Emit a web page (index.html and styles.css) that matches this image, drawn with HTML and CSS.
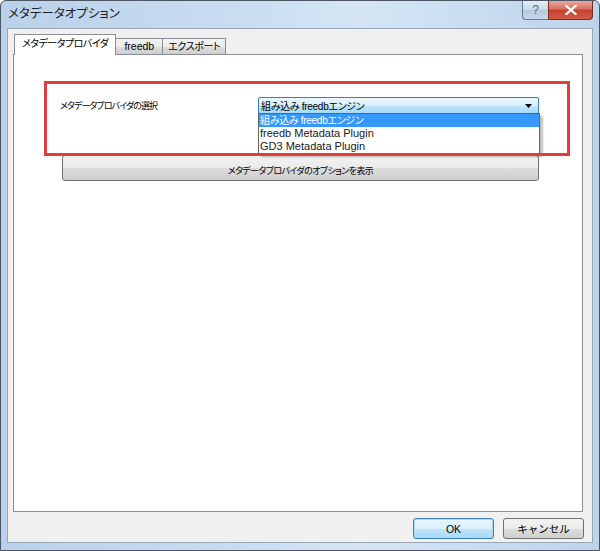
FILE: index.html
```html
<!DOCTYPE html>
<html lang="ja">
<head>
<meta charset="utf-8">
<title>メタデータオプション</title>
<link rel="stylesheet" href="styles.css">
</head>
<body>
<div class="window">
  <div class="titlebar">
    <span class="title">メタデータオプション</span>
    <div class="caption-buttons">
      <div class="cap-btn help">?</div>
      <div class="cap-btn close">
        <svg width="12" height="10" viewBox="0 0 12 10"><path d="M1.5 1 L10.5 9 M10.5 1 L1.5 9" stroke="#fff" stroke-width="2.3" stroke-linecap="square"/></svg>
      </div>
    </div>
  </div>
  <div class="client">
    <div class="tabs">
      <div class="tab active">メタデータプロバイダ</div>
      <div class="tab">freedb</div>
      <div class="tab">エクスポート</div>
    </div>
    <div class="panel">
      <div class="row">
        <span class="label">メタデータプロバイダの選択</span>
        <div class="combo-wrap">
          <div class="combo">
            <span class="combo-text">組み込み freedbエンジン</span>
            <svg class="arrow" width="7" height="4" viewBox="0 0 7 4"><path d="M0 0 H7 L3.5 4 Z" fill="#000"/></svg>
          </div>
          <ul class="dropdown">
            <li class="selected">組み込み freedbエンジン</li>
            <li>freedb Metadata Plugin</li>
            <li>GD3 Metadata Plugin</li>
          </ul>
        </div>
      </div>
      <button class="wide-btn">メタデータプロバイダのオプションを表示</button>
      <div class="highlight"></div>
    </div>
    <div class="footer">
      <button class="btn default">OK</button>
      <button class="btn">キャンセル</button>
    </div>
  </div>
</div>
</body>
</html>
```

FILE: styles.css
```css
* { box-sizing: border-box; }
html, body {
  margin: 0;
  padding: 0;
  background: #fff;
}
body {
  font-family: "Liberation Sans", "Noto Sans CJK JP", sans-serif;
  color: #000;
}
.window {
  width: 600px;
  height: 551px;
  border: 1px solid #4b5563;
  border-radius: 6px 6px 0 0;
  background: linear-gradient(90deg, #b9d1ea 0%, #c9ddf1 40%, #d5e5f5 60%, #bdd4ec 100%);
  display: flex;
  flex-direction: column;
  overflow: hidden;
}
.titlebar {
  height: 27px;
  display: flex;
  justify-content: space-between;
  align-items: flex-start;
  padding-left: 7px;
}
.title {
  font-size: 12.5px;
  line-height: 27px;
  font-feature-settings: "palt";
  color: #1e1e1e;
}
.caption-buttons {
  display: flex;
  margin-right: 6px;
}
.cap-btn {
  height: 19px;
  border: 1px solid #6b7a8f;
  border-top: none;
  display: flex;
  align-items: center;
  justify-content: center;
}
.help {
  width: 26px;
  border-radius: 0 0 0 4px;
  background: linear-gradient(#e4edf7, #c9d8e9 50%, #b4c8de 51%, #c8d8ea);
  font-size: 12px;
  color: #5a6a80;
  border-right: none;
}
.close {
  width: 45px;
  border-radius: 0 0 4px 0;
  border-color: #7b2a22;
  background: linear-gradient(#e9a99d, #d7705f 45%, #c3412f 50%, #d25b43 100%);
}
.client {
  flex: 1;
  margin: 0 6px 7px 6px;
  background: #f0f0f0;
  border: 1px solid #9aa7b6;
  display: flex;
  flex-direction: column;
  padding: 5px 9px 0 5px;
}
.tabs {
  display: flex;
  align-items: flex-end;
  height: 20px;
  padding-left: 1px;
  position: relative;
  z-index: 1;
}
.tab {
  height: 16px;
  border: 1px solid #898c95;
  border-bottom: none;
  background: linear-gradient(#f3f3f3, #ebebeb 50%, #dddddd 51%, #cfcfcf);
  font-size: 10px;
  line-height: 15px;
  padding: 0 5px;
  font-feature-settings: "palt";
  letter-spacing: -0.4px;
  margin-left: -1px;
  white-space: nowrap;
}
.tab:first-child { margin-left: 0; }
.tab.active {
  height: 21px;
  background: #fff;
  padding: 0 7px;
  line-height: 18px;
  margin-bottom: -1px;
  letter-spacing: -0.5px;
}
.tab:nth-child(2) { padding: 0 8px; font-size: 10.5px; letter-spacing: 0; }
.panel {
  height: 458px;
  background: #fff;
  border: 1px solid #898c95;
  position: relative;
  padding-top: 42px;
}
.row {
  display: flex;
  align-items: center;
  padding-left: 46px;
  height: 17px;
}
.label {
  width: 198px;
  font-size: 9px;
  font-feature-settings: "palt";
  letter-spacing: -0.9px;
}
.combo-wrap {
  position: relative;
  width: 281px;
  height: 17px;
}
.combo {
  height: 17px;
  border: 1px solid #3c7fb1;
  border-radius: 2px;
  background: linear-gradient(#eaf6fd, #d9f0fc 50%, #bee6fd 51%, #a7d9f5);
  display: flex;
  align-items: center;
  justify-content: space-between;
  padding: 0 6px 0 2px;
}
.combo-text {
  font-size: 10px;
  font-feature-settings: "palt";
  letter-spacing: -0.3px;
}
.dropdown {
  position: absolute;
  top: 16px;
  left: 0;
  width: 282px;
  margin: 0;
  padding: 0;
  list-style: none;
  background: #fff;
  border: 1px solid #646464;
  box-shadow: 3px 3px 2px rgba(0, 0, 0, 0.25);
  z-index: 2;
}
.dropdown li {
  height: 13px;
  line-height: 13px;
  font-size: 11px;
  padding-left: 1px;
  white-space: nowrap;
  color: #1a1a1a;
}
.dropdown li.selected {
  background: #3399ff;
  color: #fff;
  font-size: 10px;
  font-feature-settings: "palt";
  letter-spacing: -0.3px;
}
.wide-btn {
  display: block;
  margin: 41px 0 0 48px;
  width: 477px;
  height: 26px;
  border: 1px solid #707070;
  border-radius: 3px;
  background: linear-gradient(#f2f2f2, #ebebeb 50%, #dddddd 51%, #cfcfcf);
  font-family: inherit;
  font-size: 9px;
  font-feature-settings: "palt";
  letter-spacing: -0.6px;
  padding: 0;
  padding-top: 4px;
  color: #000;
}
.highlight {
  position: absolute;
  left: 30px;
  top: 26px;
  width: 526px;
  height: 75px;
  border: 3px solid #e23d3d;
  z-index: 3;
  pointer-events: none;
}
.footer {
  display: flex;
  justify-content: flex-end;
  gap: 9px;
  padding-top: 6px;
  margin-right: -1px;
}
.btn {
  width: 81px;
  height: 21px;
  border: 1px solid #707070;
  border-radius: 3px;
  background: linear-gradient(#f2f2f2, #ebebeb 50%, #dddddd 51%, #cfcfcf);
  font-family: inherit;
  font-size: 10.5px;
  padding: 0;
  color: #000;
}
.btn.default {
  border-color: #3c7fb1;
  box-shadow: inset 0 0 0 1px #a7d9f5;
  background: linear-gradient(#eaf6fd, #d9f0fc 50%, #bee6fd 51%, #a7d9f5);
}
```
